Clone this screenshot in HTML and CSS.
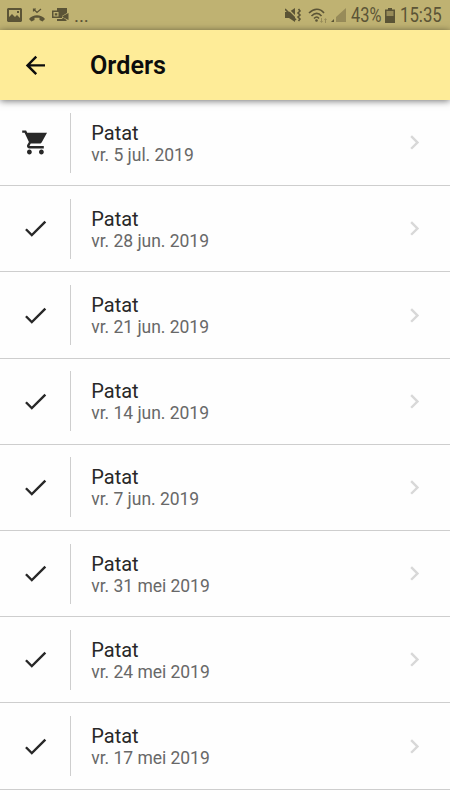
FILE: index.html
```html
<!DOCTYPE html>
<html lang="nl">
<head>
<meta charset="utf-8">
<title>Orders</title>
<link rel="stylesheet" href="styles.css">
</head>
<body>
<svg width="0" height="0" class="defs">
  <symbol id="check" viewBox="0 0 24 24"><path d="M9 16.17L4.83 12l-1.42 1.41L9 19 21 7l-1.41-1.41z"/></symbol>
  <symbol id="next" viewBox="0 0 24 24"><path d="M10 6L8.59 7.41 13.17 12l-4.58 4.59L10 18l6-6z"/></symbol>
  <symbol id="cart" viewBox="0 0 24 24"><path d="M7 18c-1.1 0-1.99.9-1.99 2S5.9 22 7 22s2-.9 2-2-.9-2-2-2zM1 2v2h2l3.6 7.59-1.35 2.45c-.16.28-.25.61-.25.96 0 1.1.9 2 2 2h12v-2H7.42c-.14 0-.25-.11-.25-.25l.03-.12.9-1.63h7.45c.75 0 1.41-.41 1.75-1.03L21.7 4H5.21l-.94-2H1zm16 16c-1.1 0-1.99.9-1.99 2s.89 2 1.99 2 2-.9 2-2-.9-2-2-2z"/></symbol>
</svg>
<div class="status">
  <div class="notifications">
    <svg width="15" height="14" viewBox="0 0 15 14"><path fill-rule="evenodd" d="M1 0h13l1 1v12l-1 1H1l-1-1V1zM2 2v7l3-3 3 3 2-2 3 3V2zM10 3h2v2h-2z"/></svg>
    <svg width="16" height="14" viewBox="0 0 16 14"><path d="M0 11c4-5 12-5 16 0l-2.500 2.500L10.500 12V9.800h-5V12L2.500 13.500z"/><path class="line thin" d="M4.500 3.500V1H7M4.500 1L8 4.500l4-3.500"/></svg>
    <svg width="17" height="14" viewBox="0 0 17 14"><path fill-rule="evenodd" d="M0 2.500h5V0h10v5l-5 3v2H0zM1.500 4v4.500h5V4zM2.800 5.200h2.500v2.300H2.800z"/><path d="M10 8.500l6.500-3.500v7l-4-2zM5 11h5l1-1.500 3.500 2.500v1H5z"/></svg>
    <span class="more">...</span>
  </div>
  <div class="system">
    <svg class="mute" width="17" height="16" viewBox="0 0 17 16"><path d="M0 5h4l6-4v14l-6-4H0z"/><path class="slash" d="M2 1l11 11"/><path class="line" d="M0 2l11 11"/><path class="line" d="M13.500 2l1.500 2-2 2 2 2-2 2 2 2-1.500 2"/></svg>
    <svg class="wifi" width="21" height="15" viewBox="0 0 21 15"><path class="line" d="M1 5c5-5 11-5 15 0M3.500 8c3.500-3.500 7-3.500 10 0M6 10.500c2-2 3.500-2 5 0"/><circle cx="8.500" cy="12.500" r="1.300"/><path class="faint" d="M13 10h1v3h1l-1.500 2-1.500-2h1zM18 15h-1v-3h-1l1.500-2 1.500 2h-1z"/></svg>
    <svg class="signal" width="15" height="14" viewBox="0 0 15 14"><path class="faint" d="M15 0v14H5V9z"/><path d="M0 14l3-3v3z"/></svg>
    <span class="percent">43%</span>
    <svg class="battery" width="10" height="15" viewBox="0 0 10 15"><path class="faint" d="M1 3h8v6H1z"/><path fill-rule="evenodd" d="M3 0h4v1.500h3V15H0V1.500h3zM1.500 3v5h7V3z"/></svg>
    <span class="clock">15:35</span>
  </div>
</div>
<header class="bar">
  <div class="lead"><svg class="icon" viewBox="0 0 24 24"><path d="M20 11H7.830l5.590-5.590L12 4l-8 8 8 8 1.410-1.410L7.830 13H20v-2z"/></svg></div>
  <h1>Orders</h1>
</header>
<main class="orders">
  <div class="order"><div class="lead"><svg class="icon"><use href="#cart"/></svg></div><div class="text"><div class="name">Patat</div><div class="date">vr. 5 jul. 2019</div></div><svg class="icon next"><use href="#next"/></svg></div>
  <div class="order"><div class="lead"><svg class="icon"><use href="#check"/></svg></div><div class="text"><div class="name">Patat</div><div class="date">vr. 28 jun. 2019</div></div><svg class="icon next"><use href="#next"/></svg></div>
  <div class="order"><div class="lead"><svg class="icon"><use href="#check"/></svg></div><div class="text"><div class="name">Patat</div><div class="date">vr. 21 jun. 2019</div></div><svg class="icon next"><use href="#next"/></svg></div>
  <div class="order"><div class="lead"><svg class="icon"><use href="#check"/></svg></div><div class="text"><div class="name">Patat</div><div class="date">vr. 14 jun. 2019</div></div><svg class="icon next"><use href="#next"/></svg></div>
  <div class="order"><div class="lead"><svg class="icon"><use href="#check"/></svg></div><div class="text"><div class="name">Patat</div><div class="date">vr. 7 jun. 2019</div></div><svg class="icon next"><use href="#next"/></svg></div>
  <div class="order"><div class="lead"><svg class="icon"><use href="#check"/></svg></div><div class="text"><div class="name">Patat</div><div class="date">vr. 31 mei 2019</div></div><svg class="icon next"><use href="#next"/></svg></div>
  <div class="order"><div class="lead"><svg class="icon"><use href="#check"/></svg></div><div class="text"><div class="name">Patat</div><div class="date">vr. 24 mei 2019</div></div><svg class="icon next"><use href="#next"/></svg></div>
  <div class="order"><div class="lead"><svg class="icon"><use href="#check"/></svg></div><div class="text"><div class="name">Patat</div><div class="date">vr. 17 mei 2019</div></div><svg class="icon next"><use href="#next"/></svg></div>
</main>
</body>
</html>
```
FILE: styles.css
```css
* { box-sizing: border-box; }
body {
  margin: 0;
  height: 800px;
  overflow: hidden;
  background: #fefefe;
  font-family: Roboto, sans-serif;
  color: #282828;
}
svg { display: block; flex: none; }
.defs { display: none; }
.status {
  height: 30px;
  background: #bfb272;
  color: #5b5436;
  display: flex;
  justify-content: space-between;
  align-items: center;
  padding: 0 8px 0 7px;
}
.status svg { fill: currentColor; }
.status .line { fill: none; stroke: currentColor; stroke-width: 1.6; }
.status .thin { stroke-width: 1.2; }
.status .slash { fill: none; stroke: #bfb272; stroke-width: 1.3; }
.status .faint { fill: #978b59; }
.notifications { display: flex; align-items: center; gap: 7px; }
.more { font-size: 19px; line-height: 20px; letter-spacing: -.1px; margin-left: -2px; padding-top: 1px; }
.system { display: flex; align-items: center; font-size: 19.500px; line-height: 30px; }
.wifi { margin-left: 6px; }
.signal { margin-left: 2px; }
.percent, .clock { white-space: nowrap; transform: scaleX(.84); transform-origin: 0 50%; padding-top: 1px; }
.percent { margin-left: 5px; width: 30px; }
.battery { margin-left: 4px; }
.clock { margin-left: 5px; width: 42px; transform: scaleX(.86); }
.bar {
  position: relative;
  height: 70px;
  display: flex;
  align-items: center;
  background: #feec98;
  color: #0c0c0c;
  box-shadow: 0 1px 7px rgba(0, 0, 0, .55);
}
h1 { margin: 1px 0 0 19px; font-size: 25.200px; font-weight: 600; line-height: 30px; }
.lead { width: 71px; display: flex; justify-content: center; padding-right: 1px; }
.icon { width: 28.800px; height: 28.800px; fill: currentColor; }
.orders { padding-top: .1px; }
.order {
  height: 86.200px;
  display: flex;
  align-items: center;
  border-bottom: 1px solid #cecece;
}
.order .lead { height: 60px; align-items: center; border-right: 1px solid #cecece; padding: 0; }
.text { flex: 1; padding-left: 20.300px; padding-top: 2px; }
.name { font-size: 20px; line-height: 22px; }
.date { font-size: 17.500px; line-height: 22px; letter-spacing: -.03px; color: #686868; }
.order .next { margin-right: 20.800px; color: #d8d8d8; }
```
